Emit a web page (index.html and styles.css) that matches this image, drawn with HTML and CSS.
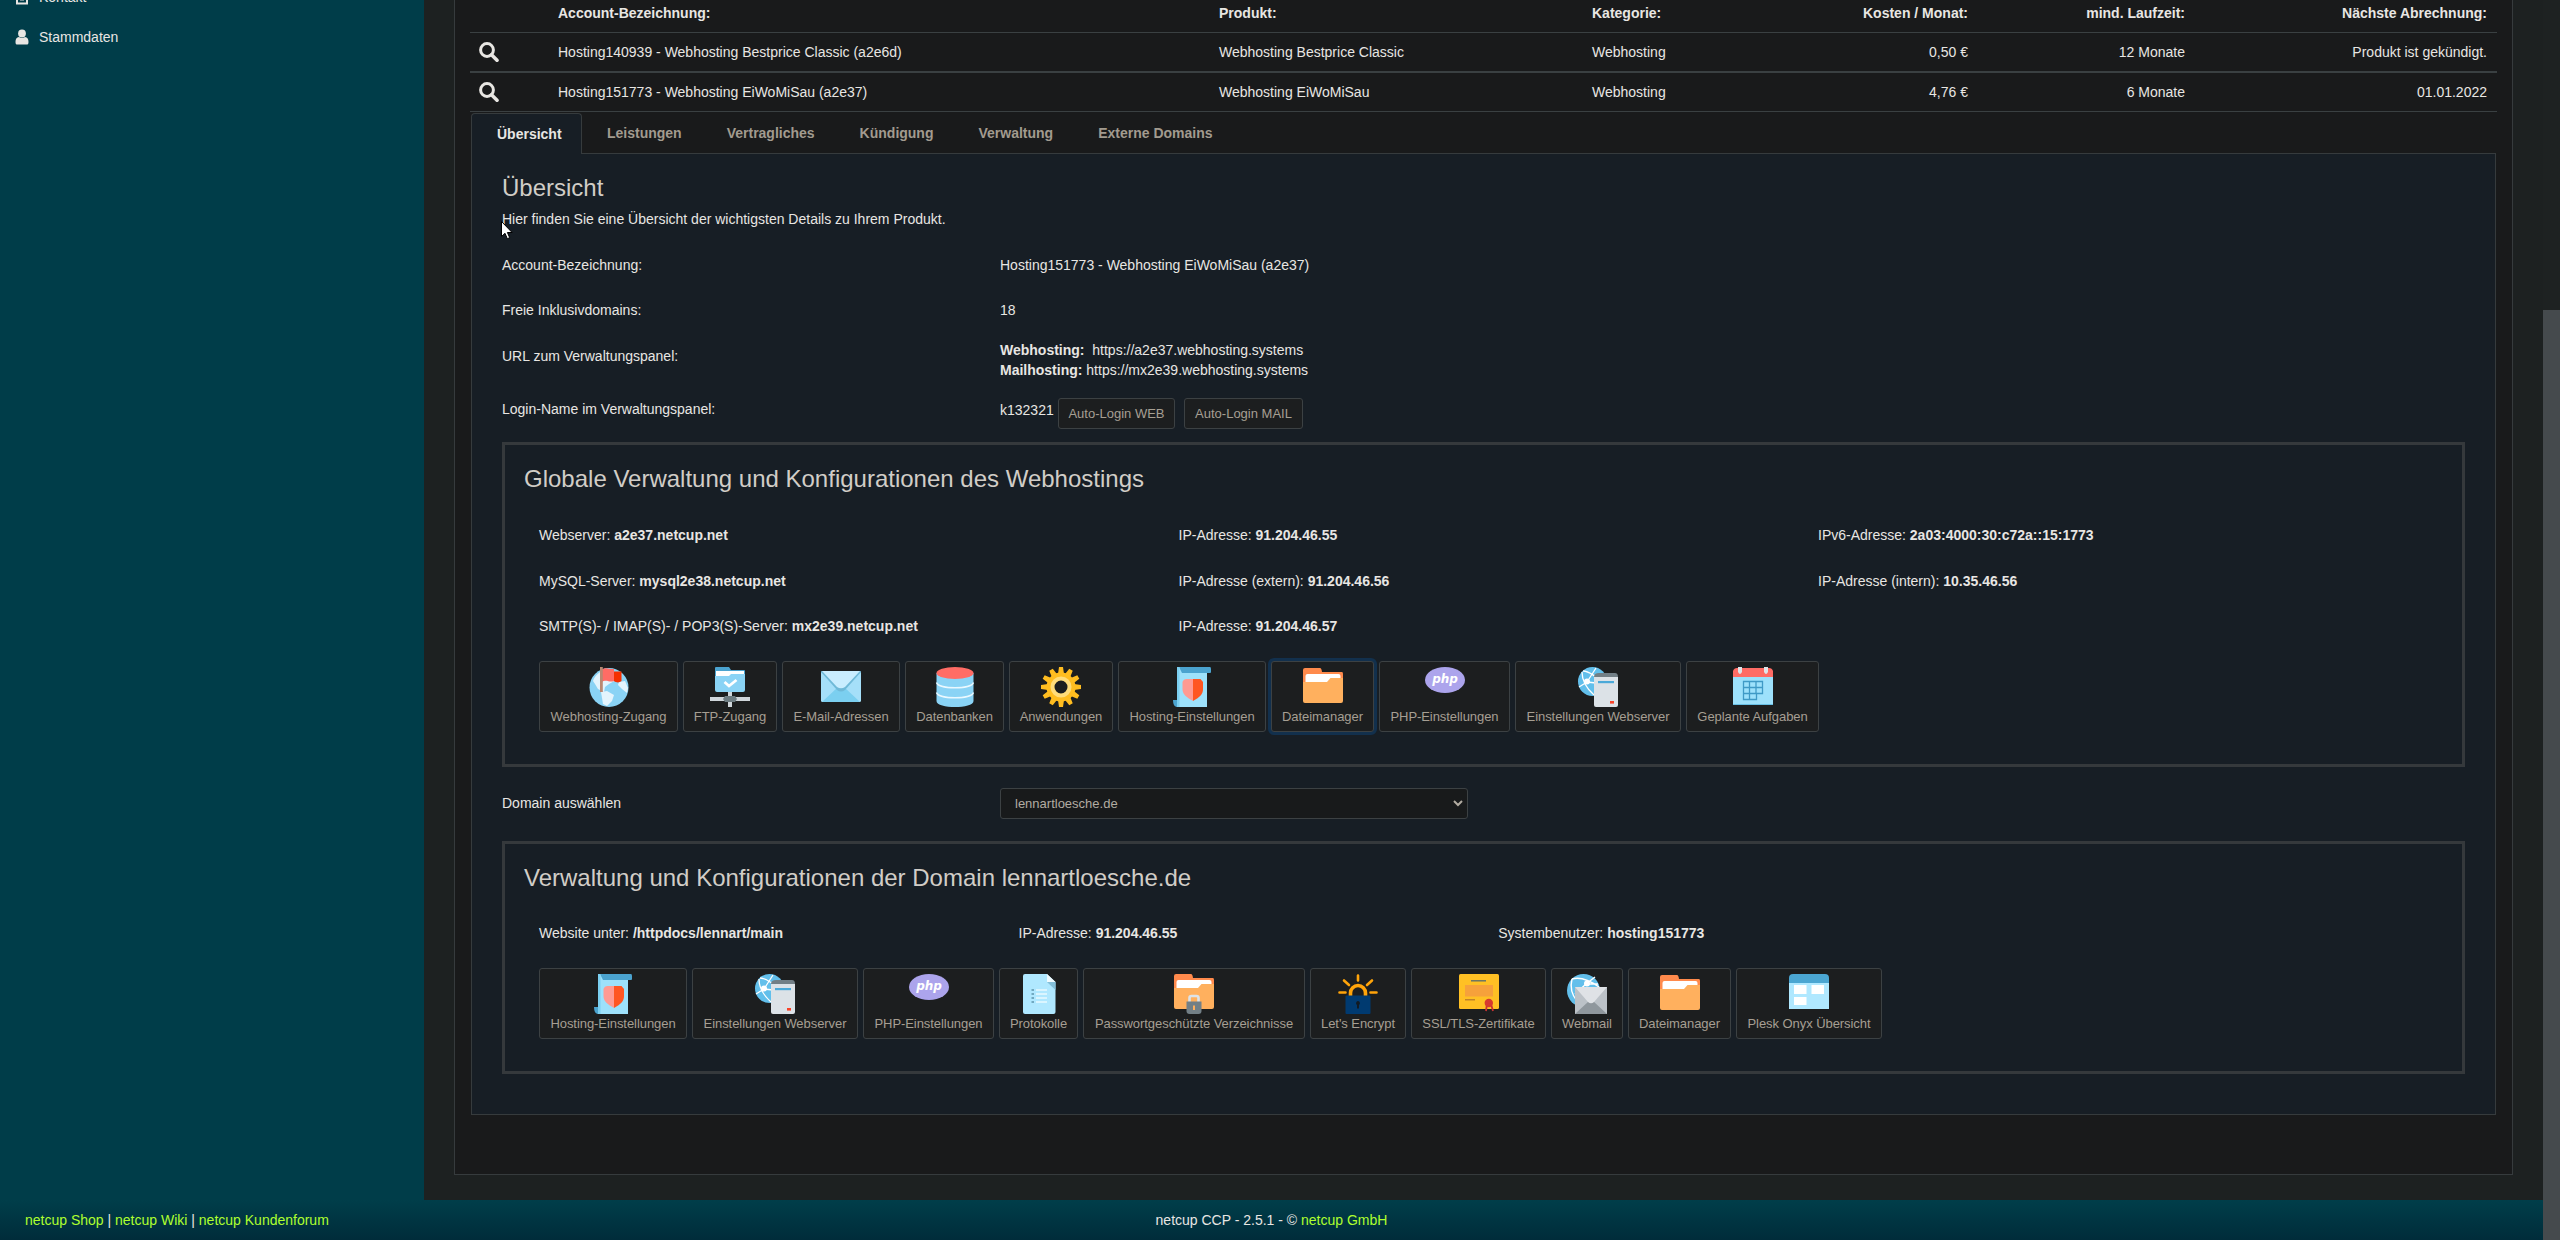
FILE: index.html
```html
<!DOCTYPE html>
<html lang="de">
<head>
<meta charset="utf-8">
<title>netcup CCP</title>
<link rel="stylesheet" href="styles.css">
</head>
<body>
<svg class="defs" aria-hidden="true">
  <symbol id="search" viewBox="0 0 20 20"><circle cx="8" cy="8" r="6.4" fill="none" stroke="currentColor" stroke-width="3"/><path d="M12.5 12.8 18 18.3" stroke="currentColor" stroke-width="3.6" stroke-linecap="round"/></symbol>
  <symbol id="globe" viewBox="0 0 40 40"><circle cx="20" cy="20.500" r="19.500" fill="#8ad3f5"/><path d="M4 14C6 8 11 4 17 3l6 3 4 7-7 4-4 3-1 5-6-3-3-5z" fill="#e3f4fd"/><path d="M12 25l6-1 7 4-2 6-5 5-4-2z" fill="#e3f4fd"/><path d="M30 15l6-1 3 7-1 5-5-4-4-4z" fill="#e3f4fd"/></symbol>
  <symbol id="web" viewBox="0 0 40 40"><circle cx="14.500" cy="14.500" r="14.500" fill="#62bfeb"/><g fill="none" stroke="#fff" stroke-width="1.300"><path d="M5 4C12 4 20 11 28 19M4 5c0 8 3 15 12 23M9 15 18 1M9 15 1 20M9 15l18 2"/></g><circle cx="9" cy="14.500" r="3" fill="#fff"/></symbol>
  <symbol id="i-access" viewBox="0 0 40 40"><use href="#globe" width="40" height="40"/><path d="M13 2.500c4-3 8 0 12-.5v12c-4 2-8-2-12 1z" fill="#ff6c65"/><path d="M25 4.500h7.500V14c-2 1.800-5 2-7.500 0z" fill="#f52f00"/><path d="M11 0h2.800v25H11z" fill="#b98872"/></symbol>
  <symbol id="i-ftp" viewBox="0 0 40 40"><path d="M5 1q0-1 1-1h13l2 3h13q1 0 1 1v6H5z" fill="#4ba3cf"/><path d="M6 4h28v6H6z" fill="#fff"/><path d="M5 9h14l2-2h14v16q0 2-2 2H7q-2 0-2-2z" fill="#8ad3f5"/><path d="M14.500 15l4.500 4 7.500-6" fill="none" stroke="#fff" stroke-width="2.800"/><path d="M18 25h4v15h-4zM0 30h40v4H0z" fill="#cfd6db"/><path d="M15 29h10l2 3-2 3H15l-2-3z" fill="#6d7c82"/></symbol>
  <symbol id="i-mail" viewBox="0 0 40 40"><rect y="4" width="40" height="31" rx="1.500" fill="#a5dff9"/><path d="M1 35 17 20h6l16 15z" fill="#7bcff0"/><path d="M0 5q0-1 1.500-1h37Q40 4 40 5L24 23q-4 3-8 0z" fill="#6fb9d8"/><path d="M1 4h38L24 20q-4 2.500-8 0z" fill="#c9edff"/></symbol>
  <symbol id="i-db" viewBox="0 0 40 40"><path d="M1.500 6v28c0 8 37 8 37 0V6z" fill="#8ad3f5"/><path d="M1.500 15.500c2 7 35 7 37 0M1.500 25.500c2 7 35 7 37 0" fill="none" stroke="#e9f8ff" stroke-width="1.400"/><ellipse cx="20" cy="6" rx="18.500" ry="6" fill="#ff6c65"/></symbol>
  <symbol id="i-gear" viewBox="0 0 40 40"><g fill="#ffbd20"><circle cx="20" cy="20" r="14.500"/><g id="t"><path d="M17 7l1-7h4l1 7zM17 33l1 7h4l1-7z"/></g><use href="#t" transform="rotate(30 20 20)"/><use href="#t" transform="rotate(60 20 20)"/><use href="#t" transform="rotate(90 20 20)"/><use href="#t" transform="rotate(120 20 20)"/><use href="#t" transform="rotate(150 20 20)"/></g><circle cx="20" cy="20" r="8.500" fill="#1c1e1f" stroke="#ffdc7a" stroke-width="4"/></symbol>
  <symbol id="i-hosting" viewBox="0 0 40 40"><path d="M7 0h28v40H7z" fill="#9de1fb"/><path d="M7 0h31q1 0 1 2v3q0 1-1 1H10z" fill="#4ba3cf"/><path d="M5 0h2.500v40H5z" fill="#7bcff0"/><path d="M1 33h4v7H4.500Q1 39 1 33z" fill="#4ba3cf"/><path d="M21 12v22c-7-4-10.500-7-10.500-12v-7q1-3 4-3z" fill="#ff9a92"/><path d="M21 12v22c7-4 10-7 10-12v-7l-2.500-3z" fill="#ff5622"/></symbol>
  <symbol id="i-folder" viewBox="0 0 40 40"><path d="M0 3q0-2 2-2h15q1.500 0 2 4h20q1 0 1 2v15H0z" fill="#ff8a4c"/><path d="M2.500 9q0-2 2-2h31q2 0 2 2v8h-35z" fill="#fff"/><path d="M0 15h24l3.500-4H40v23q0 2-2 2H2q-2 0-2-2z" fill="#ffb05e"/></symbol>
  <symbol id="i-php" viewBox="0 0 40 40"><ellipse cx="20" cy="13" rx="20" ry="13" fill="#aca4ec"/><text x="20" y="16.300" text-anchor="middle" class="php">php</text></symbol>
  <symbol id="i-server" viewBox="0 0 40 40"><use href="#web" width="40" height="40"/><path d="M16 10q0-4 5-4h16q3 0 3 4z" fill="#727f86"/><path d="M16 10h24v28q0 2-2 2H18q-2 0-2-2z" fill="#dce2e7"/><path d="M20 14h16v2.200H20z" fill="#4ba9d8"/><path d="M32 34h4v2.600h-4z" fill="#f9442a"/></symbol>
  <symbol id="i-cal" viewBox="0 0 40 40"><path d="M0 10h40v28H0z" fill="#9de1fb"/><path d="M0 37h40v1H0z" fill="#67bfe4"/><path d="M0 10V4q1-3 4-3h32q3 0 4 3v6z" fill="#ff6c65"/><path d="M5 0h4v5q-2 4-4 0zM31 0h4v5q-2 4-4 0z" fill="#dfe5ea"/><path d="M10.500 14.500h19v12h-6v6h-13zM16.500 14.500v18M23 14.500v12M10.500 20.500h19M10.500 26.500h13" fill="none" stroke="#3f9ac6" stroke-width="1.300"/></symbol>
  <symbol id="i-log" viewBox="0 0 40 40"><path d="M4 2q0-2 2-2h22l8.500 8v30q0 2-2 2H6q-2 0-2-2z" fill="#b0e8ff"/><path d="M28 8h8.500v8z" fill="#84bfd9"/><path d="M28 0l8.500 8H28z" fill="#f0fbff"/><path d="M17 16h11M17 20h11M17 24h11M17 28h11" stroke="#e8f9ff" stroke-width="1.600"/><path d="M12.500 16H15M12.500 20H15M12.500 24H15M12.500 28H15" stroke="#5c94ad" stroke-width="1.500"/></symbol>
  <symbol id="i-lockdir" viewBox="0 0 40 40"><use href="#i-folder" width="40" height="40" y="-1"/><path d="M15.500 28v-4q0-2 2-2h5q2 0 2 2v4" fill="none" stroke="#dde3e8" stroke-width="2.600"/><path d="M12.500 27.500h15V37q0 3-3 3h-9q-3 0-3-3z" fill="#727f86"/><path d="M19 31.500h2v4.500h-2z" fill="#ffb05e"/></symbol>
  <symbol id="i-le" viewBox="0 0 40 40"><path d="M12.500 22v-3a7.500 7.500 0 0 1 15 0v3" fill="none" stroke="#ffa40a" stroke-width="3.600"/><path d="M20 1.500v5M6 6.500l5 4.500M34 6.500 29 11M1.500 18.500h6M32.500 18.500h6" stroke="#ffa40a" stroke-width="2.600" stroke-linecap="round"/><rect x="7.500" y="21.500" width="25" height="18.500" rx="1" fill="#003a70"/><path d="M20 27a2.200 2.200 0 0 1 1 4v3.500h-2V31a2.200 2.200 0 0 1 1-4z" fill="#121a22"/></symbol>
  <symbol id="i-cert" viewBox="0 0 40 40"><rect width="40" height="35" rx="1.500" fill="#ffc024"/><path d="M6 11h28v11.500H6z" fill="#f6a13b"/><path d="M12 6.800h15" stroke="#60706a" stroke-width="1.400"/><path d="M6 25.800h10" stroke="#b1732c" stroke-width="1.200"/><path d="M27 37l1-7h4l2 7" fill="none" stroke="#c53232" stroke-width="1.800"/><circle cx="29.800" cy="29" r="4.200" fill="#d6382f"/></symbol>
  <symbol id="i-webmail" viewBox="0 0 40 40"><circle cx="16.500" cy="16.500" r="16.500" fill="#62bfeb"/><path d="M5 5c10-3 20 3 27 8M5 5c-2 8 0 16 5 22M19 10 28 3M19 10 8 20M19 10l12 0" fill="none" stroke="#fff" stroke-width="1.400"/><circle cx="20" cy="9.500" r="3" fill="#fff"/><rect x="8" y="13" width="32" height="27" fill="#bcc2c8"/><path d="M8 40l14-13h4l14 13z" fill="#8f979d"/><path d="M8 13h32L27 28q-3 2.500-6 0z" fill="#dfe2e6"/></symbol>
  <symbol id="i-plesk" viewBox="0 0 40 40"><path d="M0 8h40v27H0z" fill="#b0e8ff"/><path d="M0 9V4q0-4 4-4h32q4 0 4 4v5z" fill="#4ba6d2"/><path d="M5 11h12.500v9H5zM22.500 11H35v9H22.500zM5 23h12.500v8H5z" fill="#fff"/></symbol>
</svg>

<div class="window">
  <div class="page">
    <div class="middle">
      <nav class="sidebar">
        <a class="nav-item"><svg class="nav-icon" viewBox="0 0 16 16"><path d="M3 1.500h10v13H3zM6 10.500h4M8 4v3" fill="none" stroke="currentColor" stroke-width="2"/></svg>Kontakt</a>
        <a class="nav-item"><svg class="nav-icon" viewBox="0 0 16 16"><ellipse cx="8" cy="4.500" rx="3.900" ry="4.100" fill="currentColor"/><path d="M1.500 13c0-3 1-4.500 3.500-5 2 1.200 4 1.200 6 0 2.500.5 3.500 2 3.500 5 0 2-.5 2.500-2 2.500h-9c-1.500 0-2-.5-2-2.500z" fill="currentColor"/></svg>Stammdaten</a>
      </nav>
      <main class="main">
        <section class="card">
          <table class="products">
            <colgroup><col class="c-icon"><col class="c-name"><col class="c-prod"><col class="c-cat"><col class="c-cost"><col class="c-term"><col class="c-next"></colgroup>
            <thead><tr><th></th><th>Account-Bezeichnung:</th><th>Produkt:</th><th>Kategorie:</th><th class="num">Kosten / Monat:</th><th class="num">mind. Laufzeit:</th><th class="num">Nächste Abrechnung:</th></tr></thead>
            <tbody>
              <tr><td><svg class="search"><use href="#search"/></svg></td><td>Hosting140939 - Webhosting Bestprice Classic (a2e6d)</td><td>Webhosting Bestprice Classic</td><td>Webhosting</td><td class="num">0,50 €</td><td class="num">12 Monate</td><td class="num">Produkt ist gekündigt.</td></tr>
              <tr><td><svg class="search"><use href="#search"/></svg></td><td>Hosting151773 - Webhosting EiWoMiSau (a2e37)</td><td>Webhosting EiWoMiSau</td><td>Webhosting</td><td class="num">4,76 €</td><td class="num">6 Monate</td><td class="num">01.01.2022</td></tr>
            </tbody>
          </table>

          <div class="tabs">
            <a class="tab active">Übersicht</a><a class="tab">Leistungen</a><a class="tab">Vertragliches</a><a class="tab">Kündigung</a><a class="tab">Verwaltung</a><a class="tab">Externe Domains</a>
          </div>

          <div class="panel">
            <h2>Übersicht</h2>
            <p class="intro">Hier finden Sie eine Übersicht der wichtigsten Details zu Ihrem Produkt.</p>
            <svg class="cursor" viewBox="0 0 12 19"><path d="M.5.5v15l3.500-3.200 2.300 5.400 2.400-1-2.300-5.200h4.700z" fill="#fff" stroke="#000" stroke-width="1"/></svg>
            <dl class="details">
              <dt>Account-Bezeichnung:</dt><dd>Hosting151773 - Webhosting EiWoMiSau (a2e37)</dd>
              <dt>Freie Inklusivdomains:</dt><dd>18</dd>
              <dt>URL zum Verwaltungspanel:</dt><dd><b>Webhosting:</b>&nbsp; https://a2e37.webhosting.systems<br><b>Mailhosting:</b> https://mx2e39.webhosting.systems</dd>
              <dt>Login-Name im Verwaltungspanel:</dt><dd class="login"><span>k132321</span><button class="btn web">Auto-Login WEB</button><button class="btn mail">Auto-Login MAIL</button></dd>
            </dl>

            <section class="group">
              <h2>Globale Verwaltung und Konfigurationen des Webhostings</h2>
              <div class="facts">
                <div>Webserver: <b>a2e37.netcup.net</b></div><div>IP-Adresse: <b>91.204.46.55</b></div><div>IPv6-Adresse: <b>2a03:4000:30:c72a::15:1773</b></div>
                <div>MySQL-Server: <b>mysql2e38.netcup.net</b></div><div>IP-Adresse (extern): <b>91.204.46.56</b></div><div>IP-Adresse (intern): <b>10.35.46.56</b></div>
                <div>SMTP(S)- / IMAP(S)- / POP3(S)-Server: <b>mx2e39.netcup.net</b></div><div>IP-Adresse: <b>91.204.46.57</b></div>
              </div>
              <div class="tools">
                <button class="tool"><svg><use href="#i-access"/></svg>Webhosting-Zugang</button>
                <button class="tool"><svg><use href="#i-ftp"/></svg>FTP-Zugang</button>
                <button class="tool"><svg><use href="#i-mail"/></svg>E-Mail-Adressen</button>
                <button class="tool"><svg><use href="#i-db"/></svg>Datenbanken</button>
                <button class="tool"><svg><use href="#i-gear"/></svg>Anwendungen</button>
                <button class="tool"><svg><use href="#i-hosting"/></svg>Hosting-Einstellungen</button>
                <button class="tool focused"><svg><use href="#i-folder"/></svg>Dateimanager</button>
                <button class="tool"><svg><use href="#i-php"/></svg>PHP-Einstellungen</button>
                <button class="tool"><svg><use href="#i-server"/></svg>Einstellungen Webserver</button>
                <button class="tool"><svg><use href="#i-cal"/></svg>Geplante Aufgaben</button>
              </div>
            </section>

            <div class="domain">
              <label for="domain">Domain auswählen</label>
              <div class="select" id="domain">lennartloesche.de<svg class="chevron" viewBox="0 0 10 7"><path d="M1 1l4 4 4-4" fill="none" stroke="currentColor" stroke-width="2"/></svg></div>
            </div>

            <section class="group site">
              <h2>Verwaltung und Konfigurationen der Domain lennartloesche.de</h2>
              <div class="facts">
                <div>Website unter: <b>/httpdocs/lennart/main</b></div><div>IP-Adresse: <b>91.204.46.55</b></div><div>Systembenutzer: <b>hosting151773</b></div>
              </div>
              <div class="tools">
                <button class="tool"><svg><use href="#i-hosting"/></svg>Hosting-Einstellungen</button>
                <button class="tool"><svg><use href="#i-server"/></svg>Einstellungen Webserver</button>
                <button class="tool"><svg><use href="#i-php"/></svg>PHP-Einstellungen</button>
                <button class="tool"><svg><use href="#i-log"/></svg>Protokolle</button>
                <button class="tool"><svg><use href="#i-lockdir"/></svg>Passwortgeschützte Verzeichnisse</button>
                <button class="tool"><svg><use href="#i-le"/></svg>Let's Encrypt</button>
                <button class="tool"><svg><use href="#i-cert"/></svg>SSL/TLS-Zertifikate</button>
                <button class="tool"><svg><use href="#i-webmail"/></svg>Webmail</button>
                <button class="tool"><svg><use href="#i-folder"/></svg>Dateimanager</button>
                <button class="tool"><svg><use href="#i-plesk"/></svg>Plesk Onyx Übersicht</button>
              </div>
            </section>
          </div>
        </section>
      </main>
    </div>
    <footer class="footer">
      <div><a>netcup Shop</a> | <a>netcup Wiki</a> | <a>netcup Kundenforum</a></div>
      <div>netcup CCP - 2.5.1 - © <a>netcup GmbH</a></div>
      <div></div>
    </footer>
  </div>
  <div class="scrollbar"><div class="thumb"></div></div>
</div>
</body>
</html>
```
FILE: styles.css
```css
* { box-sizing: border-box; }
body {
  margin: 0;
  height: 1240px;
  overflow: hidden;
  background: #1d2121;
  color: #e8e6e3;
  font: 14px/20px "Liberation Sans", Arial, sans-serif;
}
.defs { display: none; }
.window { display: flex; height: 1240px; }
.page { width: 2543px; display: flex; flex-direction: column; }
.middle { display: flex; height: 1200px; overflow: hidden; }

.sidebar { width: 424px; background: #003d49; padding-left: 14px; }
.nav-item { display: flex; align-items: center; gap: 9px; height: 20px; margin-bottom: 20px; }
.nav-item:first-child { margin-top: -13px; }
.nav-icon { width: 16px; height: 16px; }

.main { flex: 1; padding: 0 30px; }
.card {
  height: 1175px;
  padding: 0 15px;
  background: #191a1b;
  border: 1px solid #363b3d;
  border-top: 0;
}

.products { width: 2027px; table-layout: fixed; border-collapse: separate; border-spacing: 0; }
.c-icon { width: 78px; }
.c-name { width: 661px; }
.c-prod { width: 373px; }
.c-cat { width: 186px; }
.c-cost { width: 210px; }
.c-term { width: 217px; }
.c-next { width: 302px; }
.products th, .products td { padding: 9px 10px; text-align: left; border-bottom: 1px solid #3a4042; }
.products th { padding-top: 3px; }
.products tbody tr:first-child td { border-bottom-width: 2px; }
.products td:first-child { padding-left: 9px; }
.products .num { text-align: right; }
.search { display: block; width: 20px; height: 20px; }

.tabs { display: flex; margin: 1px 0 0 1px; height: 40px; line-height: 20px; font-weight: bold; color: #a29b8f; }
.tab { padding: 10px 22px 0 23px; }
.tab.active {
  width: 111px;
  height: 41px;
  padding: 10px 0 0 25px;
  margin-right: 2px;
  color: #e8e6e3;
  background: #171e25;
  border: 1px solid #363b3d;
  border-bottom: 0;
  border-radius: 4px 4px 0 0;
  z-index: 1;
}

.panel {
  position: relative;
  width: 2025px;
  height: 962px;
  margin-left: 1px;
  padding: 20px 30px 0;
  background: #171e25;
  border: 1px solid #363b3d;
}
h2 { margin: 0; font-size: 24px; line-height: 28px; font-weight: normal; color: #d1cdc7; }
.intro { margin: 7px 0 26px; }
.cursor { position: absolute; left: 29px; top: 67px; width: 12px; height: 19px; }

.details { display: grid; grid-template-columns: 498px 1fr; grid-template-rows: 45px 40px 59px 43px; margin: 0; }
dd { margin: 0; }
.details dt:nth-of-type(3) { padding-top: 6px; }
.login { display: flex; align-items: flex-start; }
.login span { padding-top: 1px; width: 58px; }
.btn {
  height: 31px;
  margin-top: -1px;
  padding: 0;
  font: 13px/29px "Liberation Sans", Arial, sans-serif;
  color: #a69f93;
  background: #1c1e1f;
  border: 1px solid #3c4143;
  border-radius: 3px;
}
.btn.web { width: 117px; }
.btn.mail { width: 119px; margin-left: 9px; }

.group { height: 325px; padding: 20px 19px 0; border: 3px solid #35393c; }
.facts { display: grid; grid-template-columns: repeat(3, 639.500px); grid-template-rows: 46px 45px 45px; padding: 32px 0 0 15px; }
.tools {
  display: grid;
  grid-template-columns: 139px 94px 118px 99px 104px 148px 103px 131px 166px 133px;
  column-gap: 5px;
  padding-left: 15px;
}
.tool {
  display: flex;
  flex-direction: column;
  align-items: center;
  height: 71px;
  padding: 5px 0 0;
  font: 13px/20px "Liberation Sans", Arial, sans-serif;
  letter-spacing: -0.060px;
  white-space: nowrap;
  color: #a69f93;
  background: #1c1e1f;
  border: 1px solid #3c4143;
  border-radius: 3px;
}
.tool svg { width: 40px; height: 40px; }
.focused { box-shadow: 0 0 0 3px #12304d; }
.php { font: italic bold 12px "DejaVu Sans", sans-serif; letter-spacing: 0; fill: #fff; }

.domain { display: flex; align-items: flex-start; height: 75px; padding-top: 21px; }
.domain label { width: 498px; padding-top: 5px; }
.select {
  display: flex;
  align-items: center;
  justify-content: space-between;
  width: 468px;
  height: 31px;
  padding: 0 4px 0 14px;
  font-size: 13px;
  color: #b2aca2;
  background: #181a1b;
  border: 1px solid #3c4143;
  border-radius: 3px;
}
.chevron { width: 10px; height: 7px; color: #b2aca2; }

.site { height: 232px; }
.site .facts { grid-template-columns: repeat(3, 479.600px); grid-template-rows: 44px; padding-top: 31px; }
.site .tools { grid-template-columns: 148px 166px 131px 79px 222px 96px 135px 72px 103px 146px; }
.site { margin-top: -1px; }
.site .facts { grid-template-rows: 45px; }
.site { height: 233px; }

.footer {
  display: grid;
  grid-template-columns: 1fr auto 1fr;
  height: 40px;
  padding: 10px 25px 0;
  background: linear-gradient(#003e4a, #002c3a);
}
.footer a { color: #adff2f; }

.scrollbar { width: 17px; background: #1e2222; padding-top: 310px; }
.thumb { height: 930px; background: #454a4d; }
```
